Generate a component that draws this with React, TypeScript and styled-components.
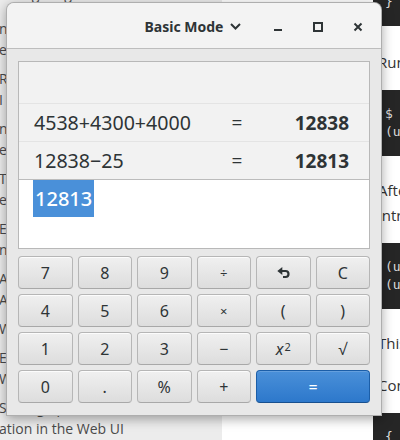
import React from 'react'
import styled, { createGlobalStyle } from 'styled-components'

const GlobalStyle = createGlobalStyle`
  html, body {
    margin: 0;
    padding: 0;
  }
  body {
    width: 400px;
    height: 440px;
    overflow: hidden;
    background: #ffffff;
  }
`

const Sup = styled.sup`
  font-size: 11px;
  margin-left: 1px;
  position: relative;
  top: -2px;
`

const sidebarItems: string[][] = [
  ['nstalling the Agent', 'e Requirements'],
  ['Reviewing Alerts', 'I Settings'],
  ['nventory Reports', 'e Filters'],
  ['T. Notifications', 'e Channels'],
  ['Editing Policies', 'nline Rules'],
  ['Adding Hosts', 'Agent Groups'],
  ['Working with Tags'],
  ['Exporting Data', 'Webhooks'],
  ['Setting up Authorization', 'ation in the Web UI'],
]

type Key = { id: string; label: React.ReactNode; wide?: boolean; suggested?: boolean; small?: boolean }

const UndoIcon = () => (
  <svg width="13" height="12" viewBox="0 0 13 12">
    <path d="M0.3 4 L5.3 0 L5.3 8 Z" fill="#2e3436" />
    <path d="M4 4 H8.5 A3 3 0 0 1 8.5 10 H6" fill="none" stroke="#2e3436" strokeWidth="2.2" />
  </svg>
)

const keys: Key[] = [
  { id: '7', label: '7' },
  { id: '8', label: '8' },
  { id: '9', label: '9' },
  { id: 'div', label: '÷', small: true },
  { id: 'undo', label: <UndoIcon /> },
  { id: 'clear', label: 'C' },
  { id: '4', label: '4' },
  { id: '5', label: '5' },
  { id: '6', label: '6' },
  { id: 'mul', label: '×', small: true },
  { id: 'lp', label: '(' },
  { id: 'rp', label: ')' },
  { id: '1', label: '1' },
  { id: '2', label: '2' },
  { id: '3', label: '3' },
  { id: 'sub', label: '−' },
  {
    id: 'sq',
    label: (
      <>
        <i>x</i>
        <Sup>2</Sup>
      </>
    ),
  },
  { id: 'sqrt', label: '√' },
  { id: '0', label: '0' },
  { id: 'dot', label: '.' },
  { id: 'pct', label: '%' },
  { id: 'add', label: '+' },
  { id: 'eq', label: '=', wide: true, suggested: true },
]

const history = [
  { expr: '4538+4300+4000', result: '12838' },
  { expr: '12838−25', result: '12813' },
]

const App = () => {
  return (
    <>
      <GlobalStyle />
      <Page>
        <Sidebar>
          <SidebarList>
            <SidebarHeading>Navigating the Web UI</SidebarHeading>
            {sidebarItems.map((lines) => (
              <SidebarItem key={lines[0]}>
                {lines.map((line) => (
                  <SidebarLine key={line}>{line}</SidebarLine>
                ))}
              </SidebarItem>
            ))}
          </SidebarList>
        </Sidebar>

        <Main>
          <CodeBlock $first>
            <CodeLine>{'}'}</CodeLine>
          </CodeBlock>
          <Prose $top={24}>
            <p>Run the following command:</p>
          </Prose>
          <CodeBlock>
            <CodeLine>$ sudo systemctl restart agent</CodeLine>
            <CodeLine>(use --force to skip checks)</CodeLine>
          </CodeBlock>
          <Prose>
            <p>
              After the restart, the service is
              <br />
              introduced to the cluster again.
            </p>
          </Prose>
          <CodeBlock>
            <CodeLine>(up) agent-01</CodeLine>
            <CodeLine>(up) agent-02</CodeLine>
          </CodeBlock>
          <Prose>
            <p>This completes the setup.</p>
            <p>Continue with the next section.</p>
          </Prose>
          <CodeBlock>
            <CodeLine>{'{'}</CodeLine>
          </CodeBlock>
        </Main>

        <Window>
          <HeaderBar>
            <span />
            <Title>
              Basic Mode
              <svg width="11" height="7" viewBox="0 0 11 7">
                <polyline points="1,1 5.5,5.5 10,1" fill="none" stroke="#2e3436" strokeWidth="2" />
              </svg>
            </Title>
            <WindowControls>
              <ControlButton>
                <svg width="10" height="10" viewBox="0 0 10 10">
                  <rect x="1" y="7" width="8" height="2" fill="#2e3436" />
                </svg>
              </ControlButton>
              <ControlButton>
                <svg width="10" height="10" viewBox="0 0 10 10">
                  <rect x="1" y="1" width="8" height="8" fill="none" stroke="#2e3436" strokeWidth="2" />
                </svg>
              </ControlButton>
              <ControlButton>
                <svg width="10" height="10" viewBox="0 0 10 10">
                  <path d="M1.5 1.5 L8.5 8.5 M8.5 1.5 L1.5 8.5" stroke="#2e3436" strokeWidth="2" />
                </svg>
              </ControlButton>
            </WindowControls>
          </HeaderBar>

          <Content>
            <Display>
              <History>
                {history.map((row) => (
                  <HistoryRow key={row.expr}>
                    <Expr>{row.expr}</Expr>
                    <Equals>=</Equals>
                    <Result>{row.result}</Result>
                  </HistoryRow>
                ))}
              </History>
              <Entry>
                <Selection>12813</Selection>
              </Entry>
            </Display>

            <Keypad>
              {keys.map((key) => (
                <KeyButton key={key.id} $wide={key.wide} $suggested={key.suggested} $small={key.small}>
                  {key.label}
                </KeyButton>
              ))}
            </Keypad>
          </Content>
        </Window>
      </Page>
    </>
  )
}

const Page = styled.div`
  position: relative;
  width: 400px;
  height: 440px;
  display: flex;
  overflow: hidden;
`

const Sidebar = styled.aside`
  width: 222px;
  flex-shrink: 0;
  background: #ececec;
  font-family: 'Open Sans', 'Noto Sans', sans-serif;
  font-size: 14px;
  color: #4a4a4a;
  overflow: hidden;
`

const SidebarList = styled.div`
  display: flex;
  flex-direction: column;
  gap: 8px;
  margin-top: -17px;
  margin-left: -1px;
`

const SidebarHeading = styled.div`
  line-height: 21px;
  margin-bottom: 6px;
  padding-left: 4px;
  white-space: nowrap;
`

const SidebarItem = styled.div`
  display: flex;
  flex-direction: column;
`

const SidebarLine = styled.span`
  line-height: 21px;
  white-space: nowrap;
`

const Main = styled.main`
  flex: 1;
  min-width: 0;
  padding-left: 151px;
  background: #ffffff;
  overflow: hidden;
`

const CodeBlock = styled.pre<{ $first?: boolean }>`
  margin: ${(p) => (p.$first ? '-22px' : '0')} 0 0;
  padding: 15px 12px 15px 12px;
  background: #262626;
  color: #dcdcdc;
  font-family: 'DejaVu Sans Mono', 'Liberation Mono', monospace;
  font-size: 13px;
  white-space: nowrap;
`

const CodeLine = styled.div`
  line-height: 18px;
`

const Prose = styled.div<{ $top?: number }>`
  padding: ${(p) => p.$top ?? 22}px 0 15px 5px;
  font-family: 'Open Sans', 'Noto Sans', sans-serif;
  font-size: 15px;
  line-height: 25px;
  color: #333333;
  white-space: nowrap;

  p {
    margin: 0 0 17px;
  }
  p:last-child {
    margin-bottom: 0;
  }
`

const Window = styled.section`
  position: absolute;
  left: 6px;
  top: 2px;
  width: 376px;
  height: 414px;
  box-sizing: border-box;
  display: flex;
  flex-direction: column;
  background: #e8e8e8;
  border: 1px solid rgba(0, 0, 0, 0.25);
  border-radius: 8px 8px 0 0;
  box-shadow: 0 3px 12px rgba(0, 0, 0, 0.35);
  font-family: 'Noto Sans', 'Open Sans', sans-serif;
  color: #2e3436;
  overflow: hidden;
`

const HeaderBar = styled.header`
  height: 45px;
  flex-shrink: 0;
  display: grid;
  grid-template-columns: 1fr auto 1fr;
  align-items: center;
  background: #f3f3f3;
  border-bottom: 1px solid #bdbdbd;
`

const Title = styled.div`
  display: flex;
  align-items: center;
  gap: 7px;
  font-size: 14px;
  font-weight: 700;
  padding-top: 1px;
  margin-left: -2px;
`

const WindowControls = styled.div`
  justify-self: end;
  display: flex;
  gap: 14px;
  padding-right: 10px;
  padding-top: 2px;
`

const ControlButton = styled.div`
  width: 26px;
  height: 24px;
  display: flex;
  align-items: center;
  justify-content: center;
`

const Content = styled.div`
  flex: 1;
  display: flex;
  flex-direction: column;
  gap: 7px;
  padding: 12px 11px 0;
`

const Display = styled.div`
  height: 188px;
  flex-shrink: 0;
  box-sizing: border-box;
  display: flex;
  flex-direction: column;
  border: 1px solid #b8b8b8;
  background: #f2f2f2;
`

const History = styled.div`
  padding-top: 41px;
  background: #f2f2f2;
  border-bottom: 1px solid #bcbcbc;
`

const HistoryRow = styled.div`
  height: 37px;
  display: grid;
  grid-template-columns: 1fr 36px 94px;
  align-items: center;
  padding: 0 20px 0 15px;
  border-top: 1px solid #e4e4e4;
  font-size: 19px;
`

const Expr = styled.span`
  white-space: nowrap;
  font-size: 19.6px;
`

const Equals = styled.span`
  text-align: center;
`

const Result = styled.span`
  text-align: right;
  font-weight: 700;
`

const Entry = styled.div`
  flex: 1;
  background: #ffffff;
  padding-left: 14px;
`

const Selection = styled.span`
  display: inline-block;
  height: 37px;
  line-height: 37px;
  padding: 0 2px;
  background: #4a90d9;
  color: #ffffff;
  font-size: 20px;
  font-weight: 500;
`

const Keypad = styled.div`
  display: grid;
  grid-template-columns: repeat(6, 1fr);
  grid-auto-rows: 33px;
  gap: 5px;
`

const KeyButton = styled.button<{ $wide?: boolean; $suggested?: boolean; $small?: boolean }>`
  grid-column: ${(p) => (p.$wide ? 'span 2' : 'auto')};
  display: flex;
  align-items: center;
  justify-content: center;
  padding: 0;
  border-radius: 4px;
  font-family: 'Noto Sans', 'Open Sans', sans-serif;
  font-size: ${(p) => (p.$small ? '13px' : '16px')};
  color: ${(p) => (p.$suggested ? '#ffffff' : '#2e3436')};
  border: 1px solid ${(p) => (p.$suggested ? '#1b5ea8' : '#b6b6b6')};
  border-bottom-color: ${(p) => (p.$suggested ? '#174f8e' : '#a8a8a8')};
  background: ${(p) =>
    p.$suggested
      ? 'linear-gradient(to bottom, #4a90d9, #2d78cb)'
      : 'linear-gradient(to bottom, #f0f0f0, #dddddd)'};
  box-shadow: inset 0 1px rgba(255, 255, 255, ${(p) => (p.$suggested ? 0.15 : 0.8)});
`

export default App
